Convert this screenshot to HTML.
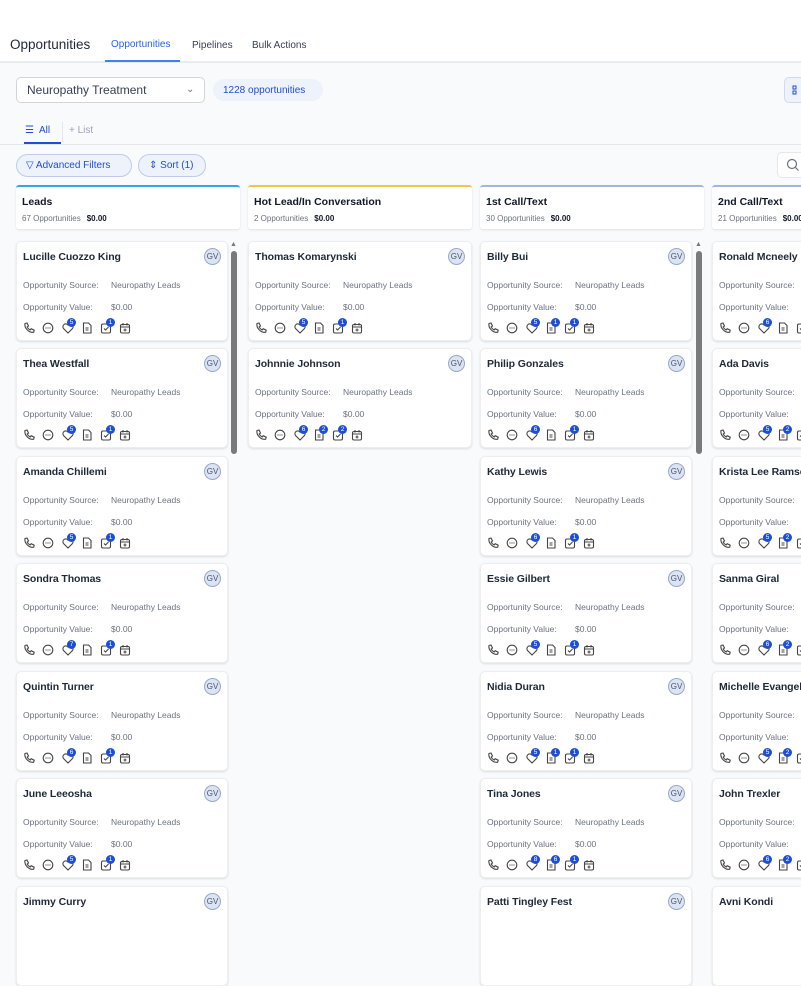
<!DOCTYPE html>
<html><head><meta charset="utf-8"><style>
*{box-sizing:border-box;margin:0;padding:0}
body{width:801px;height:905px;overflow:hidden;background:#f8fafc;font-family:"Liberation Sans",Arial,sans-serif;color:#111827;position:relative}
.hdr{position:absolute;left:0;top:0;width:801px;height:63px;background:#fff;border-bottom:2px solid #e8ebef}
.abs{position:absolute}
.card{position:absolute;width:212px;height:100px;background:#fff;border-radius:5px;box-shadow:0 1px 2px rgba(0,0,0,.12);border:1px solid #eceef1}
.card .n{position:absolute;left:6px;top:9px;font-size:10.5px;font-weight:bold;color:#1f2937;white-space:nowrap;letter-spacing:-.1px}
.card .gv{position:absolute;right:6px;top:6px;width:17px;height:17px;border-radius:50%;background:#dbe4f5;border:1px solid #9aa8c6;font-size:8px;color:#4b5563;text-align:center;line-height:15px}
.card .l{position:absolute;left:6px;font-size:8.5px;color:#6b7280;white-space:nowrap}
.card .l span{position:absolute;left:88px}
.ic{position:absolute;top:80px;width:12px;height:12px}
.bd{position:absolute;top:76px;width:9px;height:9px;border-radius:50%;background:#1d4ed8;color:#fff;font-size:6.5px;line-height:9px;text-align:center}
.colh{position:absolute;top:185px;height:44px;background:#fff;border-radius:3px;box-shadow:0 1px 2px rgba(0,0,0,.1)}
.colh b{position:absolute;left:6px;top:9px;font-size:10.5px;color:#111827;white-space:nowrap}
.colh i{position:absolute;left:6px;top:27px;font-style:normal;font-size:8px;color:#6b7280;white-space:nowrap}
.colh i s{text-decoration:none;color:#111827;font-weight:bold;margin-left:6px}
.sb{position:absolute;width:6px;background:#7a7a7a;border-radius:3px}
</style></head><body>
<svg width="0" height="0" style="position:absolute"><defs>
<g id="ph"><path d="M2 1.5l2-.5 1.5 3-1.3 1a6 6 0 003 3l1-1.3 3 1.5-.5 2C6 11 1 6 2 1.5z" fill="none" stroke="#444" stroke-width="1.1"/></g>
<g id="ch"><circle cx="6" cy="6" r="4.8" fill="none" stroke="#444" stroke-width="1.1"/><circle cx="4" cy="6" r=".6" fill="#444"/><circle cx="6" cy="6" r=".6" fill="#444"/><circle cx="8" cy="6" r=".6" fill="#444"/></g>
<g id="tg"><path d="M6 11L1.5 6.5A2.5 2.5 0 016 3a2.5 2.5 0 014.5 3.5z" fill="none" stroke="#444" stroke-width="1.1"/></g>
<g id="dc"><path d="M2.5 1h5l2.5 2.5V11h-7.5z M4.5 6h3 M4.5 8h3" fill="none" stroke="#444" stroke-width="1.1"/></g>
<g id="tk"><rect x="1.5" y="2" width="9" height="9" rx="1.5" fill="none" stroke="#444" stroke-width="1.1"/><path d="M4 6.5l1.5 1.5 3-3" fill="none" stroke="#444" stroke-width="1.1"/></g>
<g id="cl"><rect x="1.5" y="2.5" width="9" height="8.5" rx="1.5" fill="none" stroke="#444" stroke-width="1.1"/><path d="M1.5 5h9 M4 1v2.5 M8 1v2.5 M6 6.5v3 M4.5 8h3" fill="none" stroke="#444" stroke-width="1.1"/></g>
</defs></svg>

<div class="hdr">
<div class="abs" style="left:10px;top:37px;font-size:13.5px;color:#1f2937">Opportunities</div>
<div class="abs" style="left:111px;top:39px;font-size:10px;color:#2563eb">Opportunities</div>
<div class="abs" style="left:105px;top:60px;width:75px;height:2px;background:#3b82f6"></div>
<div class="abs" style="left:192px;top:40px;font-size:10px;color:#374151">Pipelines</div>
<div class="abs" style="left:252px;top:40px;font-size:10px;color:#374151">Bulk Actions</div>
</div>

<div class="abs" style="left:16px;top:77px;width:189px;height:26px;background:#fff;border:1px solid #d1d5db;border-radius:5px"></div>
<div class="abs" style="left:27px;top:83px;font-size:12px;color:#374151">Neuropathy Treatment</div>
<div class="abs" style="left:186px;top:84px;font-size:10px;color:#6b7280">&#8964;</div>
<div class="abs" style="left:213px;top:79px;width:110px;height:22px;background:#eef2fb;border-radius:11px"></div>
<div class="abs" style="left:223px;top:85px;font-size:10px;color:#1d4ed8">1228 opportunities</div>
<div class="abs" style="left:784px;top:77px;width:24px;height:26px;background:#eef2fb;border:1px solid #d1d9ea;border-radius:5px"></div>
<svg class="abs" style="left:792px;top:85px" width="9" height="10"><rect x="1" y="1" width="3" height="3" fill="none" stroke="#1d4ed8"/><rect x="1" y="6" width="3" height="3" fill="none" stroke="#1d4ed8"/></svg>

<div class="abs" style="left:25px;top:125px;font-size:10px;color:#1d4ed8">&#9776;&nbsp; All</div>
<div class="abs" style="left:24px;top:142px;width:37px;height:2px;background:#1d4ed8"></div>
<div class="abs" style="left:62px;top:122px;width:1px;height:20px;background:#e5e7eb"></div>
<div class="abs" style="left:69px;top:125px;font-size:10px;color:#9ca3af">+ List</div>
<div class="abs" style="left:0;top:144px;width:801px;height:1px;background:#e5e7eb"></div>

<div class="abs" style="left:16px;top:154px;width:116px;height:23px;background:#eef2fb;border:1px solid #bfcbe8;border-radius:12px"></div>
<div class="abs" style="left:26px;top:160px;font-size:10px;color:#1d4ed8">&#9661; Advanced Filters</div>
<div class="abs" style="left:138px;top:154px;width:68px;height:23px;background:#eef2fb;border:1px solid #bfcbe8;border-radius:12px"></div>
<div class="abs" style="left:149px;top:160px;font-size:10px;color:#1d4ed8">&#8661; Sort (1)</div>
<div class="abs" style="left:777px;top:152px;width:30px;height:26px;background:#fff;border:1px solid #e5e7eb;border-radius:5px"></div>
<svg class="abs" style="left:786px;top:158px" width="14" height="14"><circle cx="6" cy="6" r="4.5" fill="none" stroke="#6b7280" stroke-width="1.2"/><path d="M9.5 9.5l3 3" stroke="#6b7280" stroke-width="1.2"/></svg>

<div class="colh" style="left:16px;width:224px;border-top:2px solid #38a3e8"><b>Leads</b><i>67 Opportunities<s>$0.00</s></i></div>
<div class="colh" style="left:248px;width:224px;border-top:2px solid #f5c542"><b>Hot Lead/In Conversation</b><i>2 Opportunities<s>$0.00</s></i></div>
<div class="colh" style="left:480px;width:224px;border-top:2px solid #a5b4e0"><b>1st Call/Text</b><i>30 Opportunities<s>$0.00</s></i></div>
<div class="colh" style="left:712px;width:224px;border-top:2px solid #a5b4e0"><b>2nd Call/Text</b><i>21 Opportunities<s>$0.00</s></i></div>

<div class="sb" style="left:231px;top:251px;height:203px"></div>
<div class="abs" style="left:230px;top:241px;font-size:7px;color:#777">&#9650;</div>
<div class="sb" style="left:696px;top:251px;height:203px"></div>
<div class="abs" style="left:695px;top:241px;font-size:7px;color:#777">&#9650;</div>

<!-- Column 1 -->
<div class="card" style="left:16px;top:241px"><div class="n">Lucille Cuozzo King</div><div class="gv">GV</div><div class="l" style="top:38px">Opportunity Source:<span>Neuropathy Leads</span></div><div class="l" style="top:60px">Opportunity Value:<span>$0.00</span></div><svg class="ic" style="left:6px"><use href="#ph"/></svg><svg class="ic" style="left:25px"><use href="#ch"/></svg><svg class="ic" style="left:45px"><use href="#tg"/></svg><div class="bd" style="left:50px">5</div><svg class="ic" style="left:64px"><use href="#dc"/></svg><svg class="ic" style="left:83px"><use href="#tk"/></svg><div class="bd" style="left:89px">1</div><svg class="ic" style="left:102px"><use href="#cl"/></svg></div>
<div class="card" style="left:16px;top:348px"><div class="n">Thea Westfall</div><div class="gv">GV</div><div class="l" style="top:38px">Opportunity Source:<span>Neuropathy Leads</span></div><div class="l" style="top:60px">Opportunity Value:<span>$0.00</span></div><svg class="ic" style="left:6px"><use href="#ph"/></svg><svg class="ic" style="left:25px"><use href="#ch"/></svg><svg class="ic" style="left:45px"><use href="#tg"/></svg><div class="bd" style="left:50px">5</div><svg class="ic" style="left:64px"><use href="#dc"/></svg><svg class="ic" style="left:83px"><use href="#tk"/></svg><div class="bd" style="left:89px">1</div><svg class="ic" style="left:102px"><use href="#cl"/></svg></div>
<div class="card" style="left:16px;top:456px"><div class="n">Amanda Chillemi</div><div class="gv">GV</div><div class="l" style="top:38px">Opportunity Source:<span>Neuropathy Leads</span></div><div class="l" style="top:60px">Opportunity Value:<span>$0.00</span></div><svg class="ic" style="left:6px"><use href="#ph"/></svg><svg class="ic" style="left:25px"><use href="#ch"/></svg><svg class="ic" style="left:45px"><use href="#tg"/></svg><div class="bd" style="left:50px">5</div><svg class="ic" style="left:64px"><use href="#dc"/></svg><svg class="ic" style="left:83px"><use href="#tk"/></svg><div class="bd" style="left:89px">1</div><svg class="ic" style="left:102px"><use href="#cl"/></svg></div>
<div class="card" style="left:16px;top:563px"><div class="n">Sondra Thomas</div><div class="gv">GV</div><div class="l" style="top:38px">Opportunity Source:<span>Neuropathy Leads</span></div><div class="l" style="top:60px">Opportunity Value:<span>$0.00</span></div><svg class="ic" style="left:6px"><use href="#ph"/></svg><svg class="ic" style="left:25px"><use href="#ch"/></svg><svg class="ic" style="left:45px"><use href="#tg"/></svg><div class="bd" style="left:50px">7</div><svg class="ic" style="left:64px"><use href="#dc"/></svg><svg class="ic" style="left:83px"><use href="#tk"/></svg><div class="bd" style="left:89px">1</div><svg class="ic" style="left:102px"><use href="#cl"/></svg></div>
<div class="card" style="left:16px;top:671px"><div class="n">Quintin Turner</div><div class="gv">GV</div><div class="l" style="top:38px">Opportunity Source:<span>Neuropathy Leads</span></div><div class="l" style="top:60px">Opportunity Value:<span>$0.00</span></div><svg class="ic" style="left:6px"><use href="#ph"/></svg><svg class="ic" style="left:25px"><use href="#ch"/></svg><svg class="ic" style="left:45px"><use href="#tg"/></svg><div class="bd" style="left:50px">6</div><svg class="ic" style="left:64px"><use href="#dc"/></svg><svg class="ic" style="left:83px"><use href="#tk"/></svg><div class="bd" style="left:89px">1</div><svg class="ic" style="left:102px"><use href="#cl"/></svg></div>
<div class="card" style="left:16px;top:778px"><div class="n">June Leeosha</div><div class="gv">GV</div><div class="l" style="top:38px">Opportunity Source:<span>Neuropathy Leads</span></div><div class="l" style="top:60px">Opportunity Value:<span>$0.00</span></div><svg class="ic" style="left:6px"><use href="#ph"/></svg><svg class="ic" style="left:25px"><use href="#ch"/></svg><svg class="ic" style="left:45px"><use href="#tg"/></svg><div class="bd" style="left:50px">5</div><svg class="ic" style="left:64px"><use href="#dc"/></svg><svg class="ic" style="left:83px"><use href="#tk"/></svg><div class="bd" style="left:89px">1</div><svg class="ic" style="left:102px"><use href="#cl"/></svg></div>
<div class="card" style="left:16px;top:886px"><div class="n">Jimmy Curry</div><div class="gv">GV</div></div>

<!-- Column 2 -->
<div class="card" style="left:248px;top:241px;width:224px"><div class="n">Thomas Komarynski</div><div class="gv">GV</div><div class="l" style="top:38px">Opportunity Source:<span>Neuropathy Leads</span></div><div class="l" style="top:60px">Opportunity Value:<span>$0.00</span></div><svg class="ic" style="left:6px"><use href="#ph"/></svg><svg class="ic" style="left:25px"><use href="#ch"/></svg><svg class="ic" style="left:45px"><use href="#tg"/></svg><div class="bd" style="left:50px">5</div><svg class="ic" style="left:64px"><use href="#dc"/></svg><svg class="ic" style="left:83px"><use href="#tk"/></svg><div class="bd" style="left:89px">1</div><svg class="ic" style="left:102px"><use href="#cl"/></svg></div>
<div class="card" style="left:248px;top:348px;width:224px"><div class="n">Johnnie Johnson</div><div class="gv">GV</div><div class="l" style="top:38px">Opportunity Source:<span>Neuropathy Leads</span></div><div class="l" style="top:60px">Opportunity Value:<span>$0.00</span></div><svg class="ic" style="left:6px"><use href="#ph"/></svg><svg class="ic" style="left:25px"><use href="#ch"/></svg><svg class="ic" style="left:45px"><use href="#tg"/></svg><div class="bd" style="left:50px">6</div><svg class="ic" style="left:64px"><use href="#dc"/></svg><div class="bd" style="left:70px">2</div><svg class="ic" style="left:83px"><use href="#tk"/></svg><div class="bd" style="left:89px">2</div><svg class="ic" style="left:102px"><use href="#cl"/></svg></div>

<!-- Column 3 -->
<div class="card" style="left:480px;top:241px"><div class="n">Billy Bui</div><div class="gv">GV</div><div class="l" style="top:38px">Opportunity Source:<span>Neuropathy Leads</span></div><div class="l" style="top:60px">Opportunity Value:<span>$0.00</span></div><svg class="ic" style="left:6px"><use href="#ph"/></svg><svg class="ic" style="left:25px"><use href="#ch"/></svg><svg class="ic" style="left:45px"><use href="#tg"/></svg><div class="bd" style="left:50px">5</div><svg class="ic" style="left:64px"><use href="#dc"/></svg><div class="bd" style="left:70px">1</div><svg class="ic" style="left:83px"><use href="#tk"/></svg><div class="bd" style="left:89px">1</div><svg class="ic" style="left:102px"><use href="#cl"/></svg></div>
<div class="card" style="left:480px;top:348px"><div class="n">Philip Gonzales</div><div class="gv">GV</div><div class="l" style="top:38px">Opportunity Source:<span>Neuropathy Leads</span></div><div class="l" style="top:60px">Opportunity Value:<span>$0.00</span></div><svg class="ic" style="left:6px"><use href="#ph"/></svg><svg class="ic" style="left:25px"><use href="#ch"/></svg><svg class="ic" style="left:45px"><use href="#tg"/></svg><div class="bd" style="left:50px">6</div><svg class="ic" style="left:64px"><use href="#dc"/></svg><svg class="ic" style="left:83px"><use href="#tk"/></svg><div class="bd" style="left:89px">1</div><svg class="ic" style="left:102px"><use href="#cl"/></svg></div>
<div class="card" style="left:480px;top:456px"><div class="n">Kathy Lewis</div><div class="gv">GV</div><div class="l" style="top:38px">Opportunity Source:<span>Neuropathy Leads</span></div><div class="l" style="top:60px">Opportunity Value:<span>$0.00</span></div><svg class="ic" style="left:6px"><use href="#ph"/></svg><svg class="ic" style="left:25px"><use href="#ch"/></svg><svg class="ic" style="left:45px"><use href="#tg"/></svg><div class="bd" style="left:50px">6</div><svg class="ic" style="left:64px"><use href="#dc"/></svg><svg class="ic" style="left:83px"><use href="#tk"/></svg><div class="bd" style="left:89px">1</div><svg class="ic" style="left:102px"><use href="#cl"/></svg></div>
<div class="card" style="left:480px;top:563px"><div class="n">Essie Gilbert</div><div class="gv">GV</div><div class="l" style="top:38px">Opportunity Source:<span>Neuropathy Leads</span></div><div class="l" style="top:60px">Opportunity Value:<span>$0.00</span></div><svg class="ic" style="left:6px"><use href="#ph"/></svg><svg class="ic" style="left:25px"><use href="#ch"/></svg><svg class="ic" style="left:45px"><use href="#tg"/></svg><div class="bd" style="left:50px">5</div><svg class="ic" style="left:64px"><use href="#dc"/></svg><svg class="ic" style="left:83px"><use href="#tk"/></svg><div class="bd" style="left:89px">1</div><svg class="ic" style="left:102px"><use href="#cl"/></svg></div>
<div class="card" style="left:480px;top:671px"><div class="n">Nidia Duran</div><div class="gv">GV</div><div class="l" style="top:38px">Opportunity Source:<span>Neuropathy Leads</span></div><div class="l" style="top:60px">Opportunity Value:<span>$0.00</span></div><svg class="ic" style="left:6px"><use href="#ph"/></svg><svg class="ic" style="left:25px"><use href="#ch"/></svg><svg class="ic" style="left:45px"><use href="#tg"/></svg><div class="bd" style="left:50px">5</div><svg class="ic" style="left:64px"><use href="#dc"/></svg><div class="bd" style="left:70px">1</div><svg class="ic" style="left:83px"><use href="#tk"/></svg><div class="bd" style="left:89px">1</div><svg class="ic" style="left:102px"><use href="#cl"/></svg></div>
<div class="card" style="left:480px;top:778px"><div class="n">Tina Jones</div><div class="gv">GV</div><div class="l" style="top:38px">Opportunity Source:<span>Neuropathy Leads</span></div><div class="l" style="top:60px">Opportunity Value:<span>$0.00</span></div><svg class="ic" style="left:6px"><use href="#ph"/></svg><svg class="ic" style="left:25px"><use href="#ch"/></svg><svg class="ic" style="left:45px"><use href="#tg"/></svg><div class="bd" style="left:50px">8</div><svg class="ic" style="left:64px"><use href="#dc"/></svg><div class="bd" style="left:70px">6</div><svg class="ic" style="left:83px"><use href="#tk"/></svg><div class="bd" style="left:89px">1</div><svg class="ic" style="left:102px"><use href="#cl"/></svg></div>
<div class="card" style="left:480px;top:886px"><div class="n">Patti Tingley Fest</div><div class="gv">GV</div></div>

<!-- Column 4 -->
<div class="card" style="left:712px;top:241px"><div class="n">Ronald Mcneely</div><div class="l" style="top:38px">Opportunity Source:</div><div class="l" style="top:60px">Opportunity Value:</div><svg class="ic" style="left:6px"><use href="#ph"/></svg><svg class="ic" style="left:25px"><use href="#ch"/></svg><svg class="ic" style="left:45px"><use href="#tg"/></svg><div class="bd" style="left:50px">6</div><svg class="ic" style="left:64px"><use href="#dc"/></svg><svg class="ic" style="left:83px"><use href="#tk"/></svg></div>
<div class="card" style="left:712px;top:348px"><div class="n">Ada Davis</div><div class="l" style="top:38px">Opportunity Source:</div><div class="l" style="top:60px">Opportunity Value:</div><svg class="ic" style="left:6px"><use href="#ph"/></svg><svg class="ic" style="left:25px"><use href="#ch"/></svg><svg class="ic" style="left:45px"><use href="#tg"/></svg><div class="bd" style="left:50px">5</div><svg class="ic" style="left:64px"><use href="#dc"/></svg><div class="bd" style="left:70px">2</div><svg class="ic" style="left:83px"><use href="#tk"/></svg></div>
<div class="card" style="left:712px;top:456px"><div class="n">Krista Lee Ramsey</div><div class="l" style="top:38px">Opportunity Source:</div><div class="l" style="top:60px">Opportunity Value:</div><svg class="ic" style="left:6px"><use href="#ph"/></svg><svg class="ic" style="left:25px"><use href="#ch"/></svg><svg class="ic" style="left:45px"><use href="#tg"/></svg><div class="bd" style="left:50px">5</div><svg class="ic" style="left:64px"><use href="#dc"/></svg><div class="bd" style="left:70px">2</div><svg class="ic" style="left:83px"><use href="#tk"/></svg></div>
<div class="card" style="left:712px;top:563px"><div class="n">Sanma Giral</div><div class="l" style="top:38px">Opportunity Source:</div><div class="l" style="top:60px">Opportunity Value:</div><svg class="ic" style="left:6px"><use href="#ph"/></svg><svg class="ic" style="left:25px"><use href="#ch"/></svg><svg class="ic" style="left:45px"><use href="#tg"/></svg><div class="bd" style="left:50px">6</div><svg class="ic" style="left:64px"><use href="#dc"/></svg><div class="bd" style="left:70px">2</div><svg class="ic" style="left:83px"><use href="#tk"/></svg></div>
<div class="card" style="left:712px;top:671px"><div class="n">Michelle Evangelista</div><div class="l" style="top:38px">Opportunity Source:</div><div class="l" style="top:60px">Opportunity Value:</div><svg class="ic" style="left:6px"><use href="#ph"/></svg><svg class="ic" style="left:25px"><use href="#ch"/></svg><svg class="ic" style="left:45px"><use href="#tg"/></svg><div class="bd" style="left:50px">5</div><svg class="ic" style="left:64px"><use href="#dc"/></svg><div class="bd" style="left:70px">2</div><svg class="ic" style="left:83px"><use href="#tk"/></svg></div>
<div class="card" style="left:712px;top:778px"><div class="n">John Trexler</div><div class="l" style="top:38px">Opportunity Source:</div><div class="l" style="top:60px">Opportunity Value:</div><svg class="ic" style="left:6px"><use href="#ph"/></svg><svg class="ic" style="left:25px"><use href="#ch"/></svg><svg class="ic" style="left:45px"><use href="#tg"/></svg><div class="bd" style="left:50px">6</div><svg class="ic" style="left:64px"><use href="#dc"/></svg><div class="bd" style="left:70px">2</div><svg class="ic" style="left:83px"><use href="#tk"/></svg></div>
<div class="card" style="left:712px;top:886px"><div class="n">Avni Kondi</div></div>
</body></html>
